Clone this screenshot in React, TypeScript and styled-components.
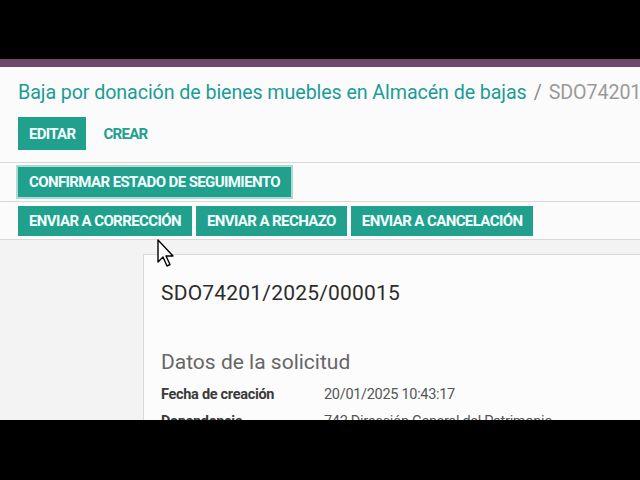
import styled, { createGlobalStyle } from 'styled-components'

const TEAL = '#20a08d'
const LINK = '#1b9c97'
const LINE = '#d9d9d9'

const GlobalStyle = createGlobalStyle`
  html, body {
    margin: 0;
    padding: 0;
    background: #000;
    font-family: Roboto, 'Liberation Sans', sans-serif;
  }
`

const Screen = styled.div`
  width: 640px;
  height: 480px;
  display: flex;
  flex-direction: column;
  background: #000;
  overflow: hidden;
  position: relative;
`

const Letterbox = styled.div<{ $h: number }>`
  flex: 0 0 ${p => p.$h}px;
  background: #000;
`

const Viewport = styled.div`
  flex: 0 0 361px;
  display: flex;
  flex-direction: column;
  background: #f0f0f0;
  overflow: hidden;
`

const MainNav = styled.div`
  flex: 0 0 8px;
  background: #70496a;
`

const ControlPanel = styled.div`
  background: #fbfbfb;
  padding: 14px 0 0 18px;
  border-bottom: 1px solid ${LINE};
`

const Breadcrumb = styled.div`
  font-size: 19.7px;
  line-height: 24px;
  white-space: nowrap;
  color: ${LINK};
  letter-spacing: -0.1px;
  span {
    color: #9a9a9a;
  }
  .sep {
    color: #8a8a8a;
    margin: 0 7px;
  }
`

const ActionBar = styled.div`
  display: flex;
  align-items: center;
  margin: 12px 0 12px;
`

const Button = styled.div<{ $flat?: boolean }>`
  height: 33px;
  padding: 0 ${p => (p.$flat ? 17 : 11)}px;
  display: flex;
  align-items: center;
  background: ${p => (p.$flat ? 'transparent' : TEAL)};
  color: ${p => (p.$flat ? TEAL : '#f4fffd')};
  font-size: 15px;
  font-weight: 700;
  letter-spacing: -0.7px;
  white-space: nowrap;
`

const StatusBar = styled.div`
  background: #fbfbfb;
  border-bottom: 1px solid ${LINE};
  display: flex;
  flex-direction: column;
`

const ButtonRow = styled.div<{ $bottom: number }>`
  display: flex;
  gap: 4px;
  padding: 4px 0 ${p => p.$bottom}px 18px;
  & + & {
    border-top: 1px solid ${LINE};
  }
`

const StateButton = styled.div<{ $focus?: boolean }>`
  height: 30px;
  padding: 0 11px;
  display: flex;
  align-items: center;
  background: ${TEAL};
  color: #f4fffd;
  font-size: 15px;
  font-weight: 700;
  letter-spacing: -0.6px;
  white-space: nowrap;
  box-shadow: ${p => (p.$focus ? '0 0 0 2px #a9ddd3' : 'none')};
`

const Content = styled.div`
  flex: 1;
  background: #f3f3f3;
  padding: 14px 0 0 143px;
`

const Sheet = styled.div`
  background: #fcfcfc;
  border: 1px solid ${LINE};
  border-right: none;
  border-bottom: none;
  padding: 26px 0 0 17px;
  height: 300px;
`

const Title = styled.div`
  font-size: 21px;
  color: #2c2c2c;
  letter-spacing: 0.2px;
  line-height: 24px;
`

const Section = styled.div`
  margin-top: 45px;
  font-size: 21px;
  color: #666;
  line-height: 24px;
`

const Field = styled.div`
  display: grid;
  grid-template-columns: 163px 1fr;
  font-size: 14.5px;
  line-height: 27px;
  white-space: nowrap;
  &:first-of-type {
    margin-top: 7px;
  }
`

const Label = styled.div`
  font-weight: 700;
  color: #3a3a3a;
  letter-spacing: -0.3px;
`

const Value = styled.div`
  color: #555;
  letter-spacing: -0.3px;
`

const Cursor = styled.svg`
  position: absolute;
  left: 157px;
  top: 239px;
`

export default function App() {
  return (
    <Screen>
      <GlobalStyle />
      <Letterbox $h={59} />
      <Viewport>
        <MainNav />
        <ControlPanel>
          <Breadcrumb>
            Baja por donación de bienes muebles en Almacén de bajas
            <span className="sep">/</span>
            <span>SDO74201/2025/000015</span>
          </Breadcrumb>
          <ActionBar>
            <Button>EDITAR</Button>
            <Button $flat>CREAR</Button>
          </ActionBar>
        </ControlPanel>
        <StatusBar>
          <ButtonRow $bottom={4}>
            <StateButton $focus>CONFIRMAR ESTADO DE SEGUIMIENTO</StateButton>
          </ButtonRow>
          <ButtonRow $bottom={3}>
            <StateButton>ENVIAR A CORRECCIÓN</StateButton>
            <StateButton>ENVIAR A RECHAZO</StateButton>
            <StateButton>ENVIAR A CANCELACIÓN</StateButton>
          </ButtonRow>
        </StatusBar>
        <Content>
          <Sheet>
            <Title>SDO74201/2025/000015</Title>
            <Section>Datos de la solicitud</Section>
            <div>
              <Field>
                <Label>Fecha de creación</Label>
                <Value>20/01/2025 10:43:17</Value>
              </Field>
              <Field>
                <Label>Dependencia</Label>
                <Value>742 Dirección General del Patrimonio</Value>
              </Field>
            </div>
          </Sheet>
        </Content>
      </Viewport>
      <Letterbox $h={60} />
      <Cursor width="20" height="30" viewBox="0 0 20 30">
        <path
          d="M1 1 L1 23 L6 18 L10 27 L13 25.5 L9 17 L16 17 Z"
          fill="#fff"
          stroke="#000"
          strokeWidth="1.4"
          strokeLinejoin="round"
        />
      </Cursor>
    </Screen>
  )
}
